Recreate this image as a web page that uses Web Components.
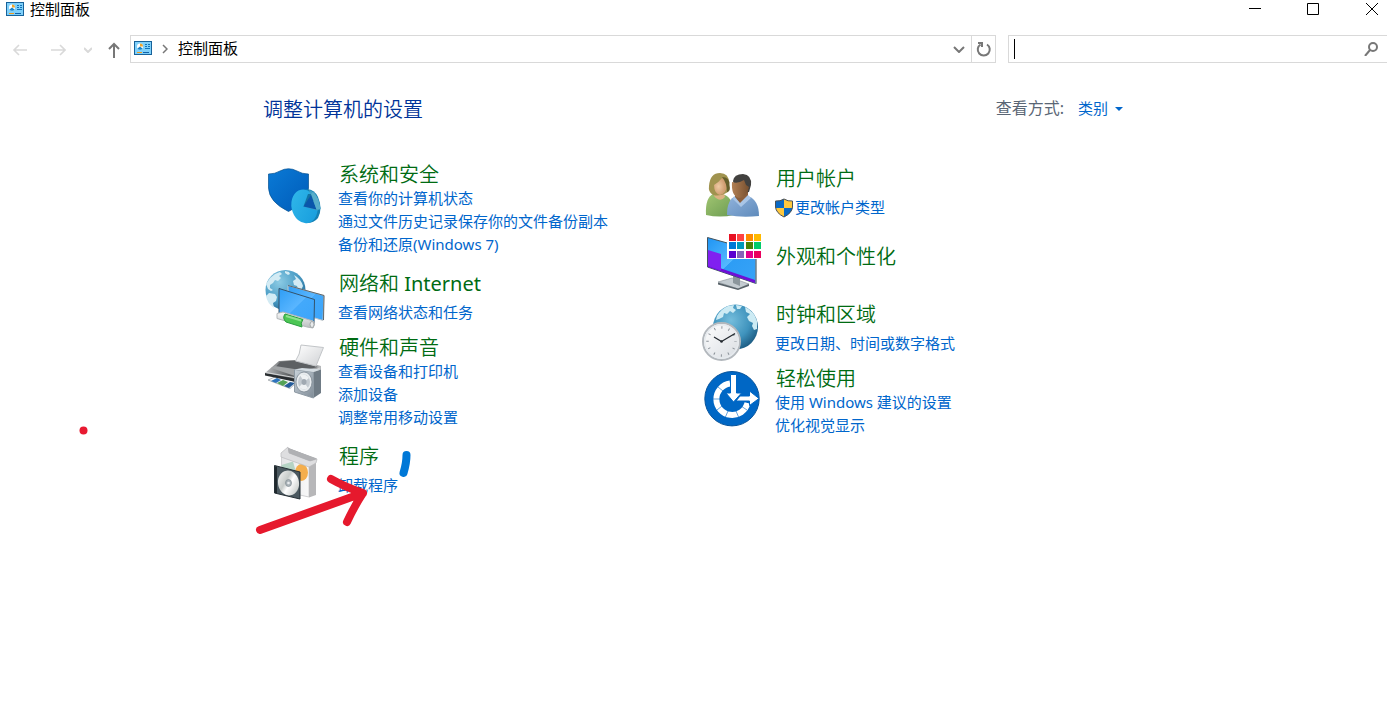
<!DOCTYPE html>
<html lang="zh-CN">
<head>
<meta charset="utf-8">
<title>控制面板</title>
<style>
  html, body {
    height: 100%;
  }
  body {
    margin: 0;
    background: #fff;
    color: #000;
    font: 15px/23px "Noto Sans", "Noto Sans CJK SC", sans-serif;
    overflow: hidden;
  }
</style>
</head>
<body>
<control-panel-window></control-panel-window>

<template id="panel-icon">
  <style>
    :host { display: block; width: 18px; height: 14px; }
    svg { display: block; }
  </style>
  <svg width="18" height="14" viewBox="0 0 18 14" aria-hidden="true">
    <rect x=".5" y=".5" width="17" height="13" fill="#7fd0fa" stroke="#17629a"/>
    <circle cx="6" cy="5.500" r="3" fill="#fff"/>
    <path d="M6 5.500V2.500A3 3 0 0 1 9 5.500Z" fill="#f2a52b"/>
    <path d="M6 5.500L8.500 7.500A3 3 0 0 1 3.500 7.500Z" fill="#1682c9"/>
    <path d="M11 3.500h2M14 3.500h2M11 5.500h2M14 5.500h2M11 7.500h5" stroke="#1474b8"/>
    <path d="M3 11.500h5" stroke="#f29a1c"/>
    <path d="M9 11.500h6" stroke="#1264a8"/>
  </svg>
</template>

<template id="title-bar">
  <style>
    :host { display: flex; height: 20px; overflow: hidden; align-items: flex-start; padding-left: 6px; }
    panel-icon { margin: 2px 6px 0 0; }
    .title { flex: 1; line-height: 18px; }
    .controls { display: flex; margin-right: -14px; }
    button {
      width: 58px;
      height: 18px;
      padding: 0;
      border: 0;
      background: none;
      display: grid;
      place-items: center;
    }
    svg { fill: none; stroke: #000; display: block; }
  </style>
  <panel-icon></panel-icon>
  <span class="title"><slot></slot></span>
  <div class="controls">
    <button type="button" aria-label="最小化"><svg width="14" height="14"><path d="M0 6.500h12"/></svg></button>
    <button type="button" aria-label="最大化"><svg width="14" height="14"><path d="M.5 1.500h11v11h-11z"/></svg></button>
    <button type="button" aria-label="关闭"><svg width="14" height="14"><path d="M1 1l12 12M13 1L1 13"/></svg></button>
  </div>
</template>

<template id="nav-bar">
  <style>
    :host { display: flex; align-items: center; height: 28px; margin-top: 15px; }
    button {
      padding: 0;
      border: 0;
      background: none;
      display: grid;
      place-items: center;
      height: 26px;
    }
    svg { display: block; fill: none; stroke: #777; stroke-width: 2; }
    .arrows { display: flex; width: 130px; align-items: center; box-sizing: border-box; padding: 1px 0 0 10px; }
    .arrows button { width: 20px; }
    .arrows .next { margin-left: 18px; }
    .arrows .recent { margin-left: 10px; }
    .arrows .up { margin-left: 6px; }
    .faded svg { stroke: #d9d9d9; }
    .address {
      flex: 1;
      display: flex;
      align-items: center;
      box-sizing: border-box;
      height: 28px;
      border: 1px solid #d9d9d9;
      padding-left: 3px;
    }
    .address panel-icon { margin-bottom: 2px; }
    .crumb { width: 26px; display: grid; place-items: center; box-sizing: border-box; padding-bottom: 1px; }
    .crumb svg { stroke-width: 1.500; }
    .address a { flex: 1; color: #000; text-decoration: none; line-height: 24px; padding-bottom: 2px; }
    .address button { width: 24px; }
    .address .refresh { border-left: 1px solid #d9d9d9; }
    .search {
      width: 379px;
      margin-left: 12px;
      box-sizing: border-box;
      height: 28px;
      display: flex;
      align-items: center;
      border: 1px solid #d9d9d9;
      border-right: 0;
      padding: 0 6px 0 5px;
    }
    .search::before { content: ""; width: 1px; height: 20px; background: #000; }
    input {
      flex: 1;
      min-width: 0;
      height: 24px;
      border: 0;
      padding: 0;
      outline: 0;
      font: inherit;
      caret-color: transparent;
    }
    .search button { width: 20px; }
  </style>
  <div class="arrows">
    <button type="button" class="faded" aria-label="后退"><svg width="16" height="12"><path d="M15 6H2M7 1L2 6l5 5" stroke-width="1.600"/></svg></button>
    <button type="button" class="faded next" aria-label="前进"><svg width="16" height="12"><path d="M1 6h14M10 1l5 5-5 5" stroke-width="1.600"/></svg></button>
    <button type="button" class="faded recent" aria-label="最近浏览的位置"><svg width="8" height="6"><path d="M0 1l4 4 4-4"/></svg></button>
    <button type="button" class="up" aria-label="上移"><svg width="14" height="16"><path d="M7 16V2M2 7l5-5 5 5"/></svg></button>
  </div>
  <div class="address">
    <panel-icon></panel-icon>
    <span class="crumb"><svg width="6" height="10"><path d="M1 1l4 4-4 4"/></svg></span>
    <a href="#"><slot></slot></a>
    <button type="button" aria-label="以前的位置"><svg width="12" height="8"><path d="M1 2l5 5 5-5"/></svg></button>
    <button type="button" class="refresh" aria-label="刷新"><svg width="16" height="16"><path d="M11 3.500a6 6 0 1 1-6.500 0M2 2h4v4"/></svg></button>
  </div>
  <div class="search">
    <input type="text" aria-label="搜索控制面板">
    <button type="button" aria-label="搜索"><svg width="14" height="14"><circle cx="9" cy="5" r="4"/><path d="M6 8l-5 6"/></svg></button>
  </div>
</template>

<template id="view-picker">
  <style>
    :host { display: flex; align-items: center; }
    label { font-size: 16px; color: #5a6675; margin-right: 14px; }
    .box { display: flex; align-items: center; }
    select {
      appearance: none;
      border: 0;
      margin: 0;
      padding: 0;
      background: none;
      font: inherit;
      color: #0066cc;
    }
    .box::after {
      content: "";
      margin-left: 6px;
      border: 4px solid transparent;
      border-top-color: #0066cc;
      border-bottom: 0;
    }
  </style>
  <label for="view">查看方式:</label>
  <span class="box">
    <select id="view"><option>类别</option></select>
  </span>
</template>

<template id="panel-category">
  <style>
    :host {
      display: grid;
      grid-template-columns: 62px 1fr;
      column-gap: 13px;
      align-items: start;
      min-height: 60px;
    }
    :host([dense]) { padding-bottom: 10px; }
    :host([dense][links="2"]) { padding-bottom: 0; }
    :host([plain]) { min-height: 68px; }
    ::slotted(svg) { display: block; width: 62px; height: 60px; overflow: visible; }
    :host([dense]) ::slotted(svg) { margin-top: 5px; }
    h2 { margin: 0 0 4px; padding: 1px 0 0 1px; font-size: 20px; line-height: 26px; font-weight: 350; }
    h2 a { color: #006b12; text-decoration: none; }
    .latin { font-weight: 400; }
    :host([dense]) h2 { margin-bottom: -1px; }
    :host([plain]) h2 { margin-top: 14px; }
    ::slotted(a) {
      display: flex;
      align-items: center;
      width: max-content;
      color: #0066cc;
      text-decoration: none;
    }
  </style>
  <slot name="icon"></slot>
  <div>
    <h2><a href="#"></a></h2>
    <slot></slot>
  </div>
</template>

<template id="pen-marks">
  <style>
    :host { position: absolute; inset: 0; pointer-events: none; }
    svg { width: 100%; height: 100%; display: block; fill: none; stroke-width: 8; stroke-linecap: round; stroke-linejoin: round; }
  </style>
  <svg aria-hidden="true">
    <circle cx="83.500" cy="430.500" r="4" fill="#e81931"/>
    <path d="M406.500 455q0 8-3 18" stroke="#0078d7"/>
    <path d="M260 530q50-18 103-37M331 479q14 8 32 14-8 12-16 29" stroke="#e6192d"/>
  </svg>
</template>

<template id="control-panel-window">
  <style>
    :host { display: block; position: relative; min-height: 100%; background: #fff; }
    main { max-width: 861px; margin: 0 auto; padding-top: 34px; }
    header { display: flex; justify-content: space-between; align-items: flex-start; height: 26px; padding-right: 1px; }
    h1 { margin: 0; font-size: 20px; line-height: 26px; font-weight: 350; color: #003399; }
    .columns { display: grid; grid-template-columns: 1fr 1fr; column-gap: 13px; padding-top: 38px; }
    .column { display: flex; flex-direction: column; gap: 4px; }
    .column + .column { padding-top: 4px; }
    .shield { margin-right: 1px; margin-left: -1px; }
  </style>
  <title-bar>控制面板</title-bar>
  <nav-bar>控制面板</nav-bar>
  <main>
    <header>
      <h1>调整计算机的设置</h1>
      <view-picker></view-picker>
    </header>
    <div class="columns">
      <div class="column">
        <panel-category heading="系统和安全" dense>
          <svg slot="icon" viewBox="0 0 62 60">
            <defs>
              <linearGradient id="shieldBlue" x2="1" y2="1"><stop stop-color="#0a7ad6"/><stop offset="1" stop-color="#005bb8"/></linearGradient>
              <linearGradient id="pieBlue" x2="1" y2="1"><stop stop-color="#31b8ea"/><stop offset="1" stop-color="#169bdc"/></linearGradient>
            </defs>
            <path d="M5.500 8Q12 8 17 5Q25.500 .5 34 5Q39 8 45.500 8V22Q45 36 25.500 45.500Q6 36 5.500 22Z" fill="url(#shieldBlue)" stroke="#045090" stroke-width=".7"/>
            <path d="M40 24Q50 21 55 31Q60 43 55 52Q51 57 44 57Z" fill="#1480b4"/>
            <ellipse cx="41.500" cy="40.300" rx="13" ry="17" fill="url(#pieBlue)" transform="rotate(-12 41.500 40.300)"/>
            <path d="M40.500 40.500L47 28L46 24Q55 26 57.500 43L54 44.500Z" fill="#3f9fc4"/>
            <path d="M40.500 40.500L45 28L48 28L53 34Z" fill="#1273a5"/>
            <path d="M40.500 40.500L48 29L53.500 43.500Z" fill="#0a56ab"/>
            <path d="M48 28L50 26Q56 31 57.500 43L53.500 43.500Z" fill="#58aecb"/>
          </svg>
          <a href="#">查看你的计算机状态</a>
          <a href="#">通过文件历史记录保存你的文件备份副本</a>
          <a href="#">备份和还原(Windows 7)</a>
        </panel-category>

        <panel-category heading="网络和 Internet">
          <svg slot="icon" viewBox="0 0 62 60">
            <defs>
              <radialGradient id="sea" cx=".35" cy=".3" r=".8"><stop stop-color="#8ccbe4"/><stop offset=".6" stop-color="#4a9cc5"/><stop offset="1" stop-color="#1f628e"/></radialGradient>
              <linearGradient id="screen" x2="1" y2="1"><stop stop-color="#2e9df5"/><stop offset=".5" stop-color="#5ab6ff"/><stop offset=".51" stop-color="#43a9fb"/><stop offset="1" stop-color="#3ba4fa"/></linearGradient>
              <linearGradient id="cable" x2="0" y2="1"><stop stop-color="#fafafa"/><stop offset="1" stop-color="#b9bdbe"/></linearGradient>
            </defs>
            <circle cx="22.500" cy="20" r="20" fill="url(#sea)"/>
            <path d="M7 8l5-4 5-2 2 2-3 2 2 2-3 3-3-1-2 3-3 2 0 3 3 2-2 1-3-2-2-5zM22 1l4 1 1 2-2 1-3-2zM31 5q7 4 9 11l-2 4-3-1-1-3-3-1-1-4 3-2zM6 23l6 1 2 3-1 4-3 2 1 5q-7-5-8-12z" fill="#d3ebf4"/>
            <path d="M25 15.500L61 25.500L60 50.500L25 40Z" fill="url(#screen)" stroke="#c5c8ca"/>
            <path d="M25 15.500L61 25.500L60.500 50" fill="none" stroke="#5d666b"/>
            <path d="M16 18.500L51.500 29.500L51 53.500L16 43Z" fill="url(#screen)" stroke="#34536b"/>
            <path d="M14 43.500L20 42L50 51Q53 54 50 58L44 57L14 48.500Z" fill="url(#cable)" stroke="#b4b8ba"/>
            <path d="M22 44L40 49.500Q37 53 39 57L23 52Q19 48 22 44Z" fill="#4cc654" stroke="#2b9e3f"/>
            <path d="M23 46L38 50.500" stroke="#8fe28e" stroke-width="2"/>
            <ellipse cx="49" cy="54.500" rx="2" ry="3" fill="#e9ebec" stroke="#a1a6a8"/>
          </svg>
          <a href="#">查看网络状态和任务</a>
        </panel-category>

        <panel-category heading="硬件和声音" dense>
          <svg slot="icon" viewBox="0 0 62 60">
            <defs>
              <linearGradient id="paper" x2="1" y2="1"><stop stop-color="#fff"/><stop offset="1" stop-color="#cfd1d4"/></linearGradient>
              <linearGradient id="body" x2="1" y2="0"><stop stop-color="#b8babc"/><stop offset=".45" stop-color="#5a5d5f"/><stop offset=".7" stop-color="#808386"/><stop offset="1" stop-color="#b9bbbd"/></linearGradient>
              <linearGradient id="box" x2="1" y2="1"><stop stop-color="#c8d2da"/><stop offset="1" stop-color="#808c97"/></linearGradient>
            </defs>
            <path d="M5 41L14 37L34 43L27 49.500Z" fill="#f5f7f8" stroke="#b0b5b9"/>
            <path d="M8 42L14 39L18 41L13 44Z" fill="#2e74bc"/>
            <path d="M14 44L20 41L25 43L20 47Z" fill="#54a257"/>
            <path d="M21 47L27 43L32 44L26 49Z" fill="#235b9a"/>
            <path d="M2 34L16 22L35 21L58 27V33L33 43Z" fill="url(#body)"/>
            <path d="M17 23L34 22L55 28L38 32L12 29Z" fill="#5d6063"/>
            <path d="M8 29L12 27L44 32L35 38Z" fill="#a2a5a7"/>
            <path d="M2 34L33 40V43L2 36.500Z" fill="#292d30"/>
            <path d="M3 33.500L34 39L57 29" fill="none" stroke="#d5d7d8"/>
            <path d="M38 6L60.500 8.500Q57 17 53 27L32.500 22Q37 16 38 6Z" fill="url(#paper)" stroke="#c2c5c8"/>
            <path d="M50.500 33L58 30.500V54L50.500 59Z" fill="#6f7b85"/>
            <path d="M31.500 30.500L50.500 33V59L31.500 53Z" fill="url(#box)" stroke="#8d99a3"/>
            <path d="M31.500 30.500L39 29L58 30.500L50.500 33Z" fill="#d5dde3"/>
            <ellipse cx="41" cy="43" rx="8" ry="10" fill="#e8ecef" stroke="#77828c" stroke-width=".7"/>
            <ellipse cx="41" cy="43" rx="6" ry="7.500" fill="#c3cad0"/>
            <path d="M41 43L37 36Q43 34 46 39ZM41 43L45 49Q40 52 36 48Z" fill="#eef1f3"/>
            <ellipse cx="41" cy="43" rx="2.500" ry="3" fill="#a0a9b2"/>
          </svg>
          <a href="#">查看设备和打印机</a>
          <a href="#">添加设备</a>
          <a href="#">调整常用移动设置</a>
        </panel-category>

        <panel-category heading="程序">
          <svg slot="icon" viewBox="0 0 62 60">
            <defs>
              <linearGradient id="carton" x2="1" y2="0"><stop stop-color="#e5e5e7"/><stop offset="1" stop-color="#f8f8f8"/></linearGradient>
              <linearGradient id="disc" x2="1" y2="1"><stop stop-color="#f8f8f8"/><stop offset=".4" stop-color="#c6cbc9"/><stop offset=".55" stop-color="#fff"/><stop offset="1" stop-color="#b3b9b6"/></linearGradient>
            </defs>
            <path d="M18.500 11L46 20V54L18.500 48Z" fill="url(#carton)" stroke="#d1d1d3"/>
            <path d="M46 21L53 18V52L46 54.500Z" fill="#b7b7b9"/>
            <path d="M18.500 22L30 18.500L34 33L19 27Z" fill="#b5d3c4"/>
            <ellipse cx="38.500" cy="29.500" rx="6.500" ry="8.500" fill="#f4ae4d"/>
            <path d="M19 11L25.500 5L54 16L46 20Z" fill="#9c9da0"/>
            <path d="M18 10L25 4L26 10L47 18L54 16L53 20L46 24L18 14Z" fill="#dedee0" stroke="#b9b9bc" stroke-width=".7"/>
            <path d="M25 5L54 15.500L47 18L26 10Z" fill="#b0b1b4"/>
            <path d="M11.500 22.500L37 29V56L11.500 50Z" fill="#4b5960" stroke="#252f35"/>
            <path d="M13 23.500V50" stroke="#20282d" stroke-width="2"/>
            <ellipse cx="25.500" cy="40" rx="10.500" ry="12.500" fill="url(#disc)" transform="rotate(-10 25.500 40)"/>
            <ellipse cx="25.500" cy="40" rx="3" ry="3.500" fill="#aab3b8" stroke="#7f8b90" stroke-width=".7"/>
            <circle cx="25.500" cy="40" r="1.300" fill="#e8ecee"/>
          </svg>
          <a href="#">卸载程序</a>
        </panel-category>
      </div>

      <div class="column">
        <panel-category heading="用户帐户">
          <svg slot="icon" viewBox="0 0 62 60">
            <defs>
              <linearGradient id="green" x2="1" y2="1"><stop stop-color="#a2c672"/><stop offset="1" stop-color="#6b9b51"/></linearGradient>
              <linearGradient id="denim" x2="1" y2="1"><stop stop-color="#91b3dc"/><stop offset="1" stop-color="#5e8abb"/></linearGradient>
              <radialGradient id="fair" cx=".35" cy=".5"><stop stop-color="#eecaa3"/><stop offset="1" stop-color="#cf9d71"/></radialGradient>
              <linearGradient id="dark" x2="1"><stop stop-color="#b28055"/><stop offset="1" stop-color="#77502f"/></linearGradient>
            </defs>
            <path d="M6 50Q5 33 13 29L25 30Q33 33 34 50Q20 53 6 50Z" fill="url(#green)"/>
            <path d="M14 27L24 28L25 32Q20 38 14 31Z" fill="#dcb182"/>
            <path d="M9 21Q10 8 20 8Q29 8 29 18L28 27Q20 32 13 30Q8 27 9 21Z" fill="#a0934f"/>
            <path d="M14 20Q19 17 22 13Q27 15 27 20Q26 29 20 30Q14 28 14 20Z" fill="url(#fair)"/>
            <path d="M22 12Q30 12 29.500 20Q31 27 27 27Q27 18 22 12Z" fill="#665f2c"/>
            <path d="M27 50Q27 34 36 31L48 31Q59 35 59 51Q42 53 27 50Z" fill="url(#denim)"/>
            <path d="M35 27L48 26L48 32L40 39L35 32Z" fill="#8b5f3d"/>
            <path d="M34 31L40 38L48 30L51 33L41 42L33 34Z" fill="#a9c5e6"/>
            <path d="M33 16Q34 9 43 9Q52 10 51 20L49 27L44 28L34 20Z" fill="#42413f"/>
            <path d="M32 17Q38 19 44 15L46 20L49 22Q47 33 39 33Q31 31 32 17Z" fill="url(#dark)"/>
          </svg>
          <a href="#"><svg class="shield" width="20" height="20" viewBox="0 0 20 20">
            <path d="M1.500 3Q6 3.500 10 1Q14 3.500 18.500 3V9Q18 15 10 19Q2 15 1.500 9Z" fill="#ffc83d"/>
            <path d="M1.500 3Q6 3.500 10 1V10H1.500ZM10 10H18.500Q17 16 10 19Z" fill="#0a69c5"/>
            <path d="M1.500 3Q6 3.500 10 1Q14 3.500 18.500 3V9Q18 15 10 19Q2 15 1.500 9Z" fill="none" stroke="#4b5158"/>
          </svg>更改帐户类型</a>
        </panel-category>

        <panel-category heading="外观和个性化" plain>
          <svg slot="icon" viewBox="0 0 62 60">
            <defs><linearGradient id="display" x2="1" y2="1"><stop stop-color="#1e94f3"/><stop offset=".5" stop-color="#55b9ff"/><stop offset=".51" stop-color="#2d9df5"/><stop offset="1" stop-color="#38a3f7"/></linearGradient></defs>
            <path d="M18 53L32 49L49 55L38 60Z" fill="#c4ccd1" stroke="#929ba1" stroke-width=".7"/>
            <path d="M18 53.500L38 59.500L49 55V57L38 61L18 55.500Z" fill="#59636a"/>
            <path d="M33 46L40 48V57L33 54Z" fill="#8b969c"/>
            <path d="M7.500 8.500L56 22V54.500L7.500 38Z" fill="url(#display)" stroke="#43525c"/>
            <path d="M8 35L55 51V54L8 38Z" fill="#6f0ed6"/>
            <path d="M8 21L21 25V41.500L8 37Z" fill="#8020f0"/>
            <path d="M56 24V55" stroke="#8b969c"/>
            <path d="M27 4h35v26H27z" fill="#fff"/>
            <path d="M29 5h7v7h-7z" fill="#e81123"/><path d="M37 5h7v7h-7z" fill="#ff4343"/><path d="M46 5h7v7h-7z" fill="#ff8c00"/><path d="M54 5h7v7h-7z" fill="#ffb900"/>
            <path d="M29 13h7v7h-7z" fill="#0078d7"/><path d="M37 13h7v7h-7z" fill="#0099bc"/><path d="M46 13h7v7h-7z" fill="#498205"/><path d="M54 13h7v7h-7z" fill="#00cc6a"/>
            <path d="M29 22h7v7h-7z" fill="#5a00d0"/><path d="M37 22h7v7h-7z" fill="#8764b8"/><path d="M46 22h7v7h-7z" fill="#e3008c"/><path d="M54 22h7v7h-7z" fill="#ea005e"/>
          </svg>
        </panel-category>

        <panel-category heading="时钟和区域">
          <svg slot="icon" viewBox="0 0 62 60">
            <defs>
              <radialGradient id="ocean" cx=".4" cy=".35" r=".7"><stop stop-color="#74bddc"/><stop offset=".6" stop-color="#3f93bd"/><stop offset="1" stop-color="#1a587f"/></radialGradient>
              <linearGradient id="dial" x2="1" y2="1"><stop stop-color="#fff"/><stop offset="1" stop-color="#d8dce1"/></linearGradient>
            </defs>
            <circle cx="35.500" cy="26" r="22.500" fill="url(#ocean)"/>
            <path d="M17 15Q21 8 28 5L34 4L33 7L36 9L33 12L30 10L27 13L24 12L23 16L19 18L16 19ZM36 4l6 1-2 3-3 0zM45 6Q54 10 57 20L57 28L54 29L52 25L53 22L49 20L47 16L50 13L46 11Z" fill="#cdebf4"/>
            <circle cx="21.500" cy="40.500" r="18.500" fill="url(#dial)" stroke="#b3b8bd" stroke-width="2"/>
            <circle cx="21.500" cy="40.500" r="16.800" fill="none" stroke="#e6eaee" stroke-width="1.500"/>
            <circle cx="21.500" cy="40.500" r="14" fill="none" stroke="#8a9198" stroke-width="2.500" stroke-dasharray="1 6.330" stroke-dashoffset=".5"/>
            <path d="M21.500 40.500L35 32.500M21.500 40.500L14 36" stroke="#23292f" stroke-width="1.300"/>
            <circle cx="21.500" cy="40.500" r="1.300" fill="#23292f"/>
          </svg>
          <a href="#">更改日期、时间或数字格式</a>
        </panel-category>

        <panel-category heading="轻松使用" dense links="2">
          <svg slot="icon" viewBox="0 0 62 60">
            <circle cx="32" cy="28.700" r="27.200" fill="#0067c5" stroke="#08549b"/>
            <path d="M30 13.500A15.800 15.800 0 1 0 47.500 33" fill="none" stroke="#fff" stroke-width="6"/>
            <path d="M13 29h8M18 17l5 4M17 40l5-4M25 48l3-7M39 48l-3-7M47 40l-6-4" stroke="#0067c5" stroke-width=".6"/>
            <path d="M30.500 4.500H36.500V23H41.500L33.500 32L26 23H30.500Z" fill="#fff" stroke="#0067c5"/>
            <path d="M36 31L40 26H49.500V21L59 28.500L49.500 35.500V31Z" fill="#fff" stroke="#0067c5"/>
          </svg>
          <a href="#">使用 Windows 建议的设置</a>
          <a href="#">优化视觉显示</a>
        </panel-category>
      </div>
    </div>
  </main>
  <pen-marks></pen-marks>
</template>

<script>
  class PanelElement extends HTMLElement {
    constructor() {
      super();
      this.attachShadow({ mode: 'open' });
      const template = document.getElementById(this.localName);
      this.shadowRoot.appendChild(template.content.cloneNode(true));
    }
  }

  class PanelCategory extends PanelElement {
    connectedCallback() {
      const link = this.shadowRoot.querySelector('h2 a');
      // Latin words look too thin at the weight of the Chinese heading
      link.innerHTML = this.getAttribute('heading').replace(/[A-Za-z]+/g, '<span class="latin">$&</span>');
    }
  }

  class NavBar extends PanelElement {
    connectedCallback() {
      this.shadowRoot.querySelector('input').focus();
    }
  }

  customElements.define('panel-icon', class extends PanelElement {});
  customElements.define('title-bar', class extends PanelElement {});
  customElements.define('nav-bar', NavBar);
  customElements.define('view-picker', class extends PanelElement {});
  customElements.define('panel-category', PanelCategory);
  customElements.define('pen-marks', class extends PanelElement {});
  customElements.define('control-panel-window', class extends PanelElement {});
</script>
</body>
</html>
